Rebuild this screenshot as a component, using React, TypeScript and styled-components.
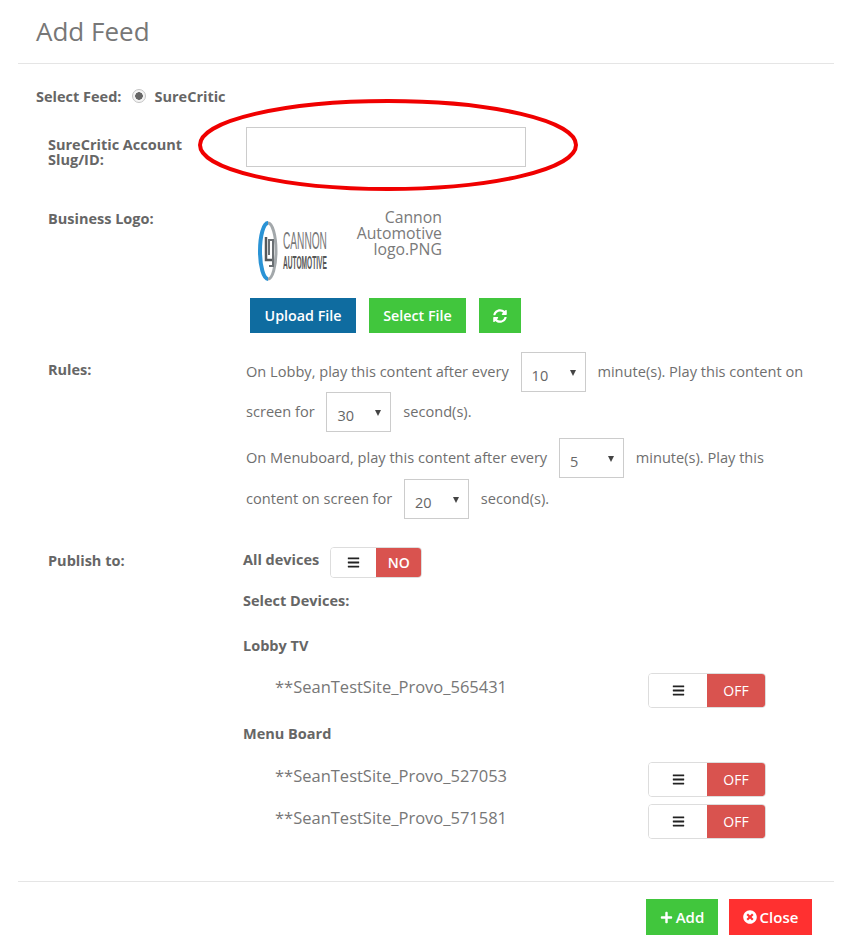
import React from "react"
import styled, { createGlobalStyle } from "styled-components"
import { FaBars, FaPlus, FaSyncAlt, FaTimesCircle } from "react-icons/fa"

const GlobalStyle = createGlobalStyle`
  html, body {
    margin: 0;
    padding: 0;
    background: #fff;
  }
  body {
    font-family: "Open Sans", "Noto Sans", sans-serif;
    color: #6b6b6b;
  }
`

const Switch = ({ label, wide }: { label: string, wide?: boolean }) => (
  <SwitchBox $wide={wide}>
    <SwitchHandle><FaBars size={13} /></SwitchHandle>
    <SwitchState $wide={wide}>{label}</SwitchState>
  </SwitchBox>
)

const Dropdown = ({ value }: { value: string }) => (
  <SelectBox>
    <span>{value}</span>
    <Caret />
  </SelectBox>
)

const Device = ({ name, top }: { name: string, top: number }) => (
  <DeviceRow $top={top}>
    <DeviceName>{name}</DeviceName>
    <Switch label="OFF" wide />
  </DeviceRow>
)

export default function App() {
  return (
    <>
      <GlobalStyle />
      <Modal>
        <Header>
          <Title>Add Feed</Title>
        </Header>

        <FeedRow>
          <Bold>Select Feed:</Bold>
          <Radio />
          <Bold>SureCritic</Bold>
        </FeedRow>

        <AccountRow>
          <AccountLabel>SureCritic Account<br />Slug/ID:</AccountLabel>
          <InputWrap>
            <TextInput />
            <Ellipse viewBox="0 0 380 94" width="380" height="94">
              <ellipse cx="190" cy="47" rx="188" ry="44" fill="none" stroke="#f00000" strokeWidth="4" />
            </Ellipse>
          </InputWrap>
        </AccountRow>

        <LogoRow>
          <Label>Business Logo:</Label>
          <div>
            <LogoLine>
              <Logo viewBox="0 0 72 62" width="72" height="62">
                <path d="M11 3 A 8 28 0 0 0 11 59" fill="none" stroke="#2a93d5" strokeWidth="4" />
                <path d="M11 3 A 8 28 0 0 1 11 59" fill="none" stroke="#a3a8ab" strokeWidth="3" />
                <path d="M9 17 V40 H15" fill="none" stroke="#55595c" strokeWidth="2.5" />
                <path d="M12 35 V20 H16 V46 H12" fill="none" stroke="#6b7074" strokeWidth="2" />
                <CannonText transform="translate(26 29) scale(0.423 1)">CANNON</CannonText>
                <AutoText transform="translate(26 49) scale(0.367 1)">AUTOMOTIVE</AutoText>
              </Logo>
              <FileName>Cannon<br />Automotive<br />logo.PNG</FileName>
            </LogoLine>
            <ButtonRow>
              <Button $color="#0f6ca0" $width={106}>Upload File</Button>
              <Button $color="#41c63d" $width={97}>Select File</Button>
              <Button $color="#41c63d" $width={42}><FaSyncAlt size={14} /></Button>
            </ButtonRow>
          </div>
        </LogoRow>

        <RulesRow>
          <RulesLabel>Rules:</RulesLabel>
          <RulesText>
            <RuleLine>On Lobby, play this content after every <Dropdown value="10" /> minute(s). Play this content on</RuleLine>
            <RuleLine>screen for <Dropdown value="30" /> second(s).</RuleLine>
            <RuleLine $top={6}>On Menuboard, play this content after every <Dropdown value="5" /> minute(s). Play this</RuleLine>
            <RuleLine $top={1}>content on screen for <Dropdown value="20" /> second(s).</RuleLine>
          </RulesText>
        </RulesRow>

        <PublishRow>
          <PublishLabel>Publish to:</PublishLabel>
          <PublishBody>
            <AllDevices>
              <AllDevicesLabel>All devices</AllDevicesLabel>
              <Switch label="NO" />
            </AllDevices>
            <SelectDevices>Select Devices:</SelectDevices>
            <Group $top={25}>Lobby TV</Group>
            <Device name="**SeanTestSite_Provo_565431" top={17} />
            <Group $top={16}>Menu Board</Group>
            <Device name="**SeanTestSite_Provo_527053" top={18} />
            <Device name="**SeanTestSite_Provo_571581" top={7} />
          </PublishBody>
        </PublishRow>

        <Footer>
          <FooterButton $color="#41c63d" $width={72}><FaPlus size={13} />Add</FooterButton>
          <FooterButton $color="#ff3030" $width={83}><FaTimesCircle size={14} />Close</FooterButton>
        </Footer>
      </Modal>
    </>
  )
}

const Modal = styled.div`
  width: 816px;
  height: 948px;
  margin-left: 18px;
  font-size: 14px;
  overflow: hidden;
`

const Header = styled.div`
  height: 63px;
  border-bottom: 1px solid #e5e5e5;
  box-sizing: content-box;
  display: flex;
  align-items: center;
  padding-left: 18px;
`

const Title = styled.h1`
  margin: 0 0 2px;
  font-size: 26px;
  line-height: 34px;
  font-weight: 400;
  color: #777;
`

const Bold = styled.span`
  font-size: 14.5px;
  font-weight: 700;
  color: #666;
`

const FeedRow = styled.div`
  display: flex;
  align-items: center;
  height: 20px;
  margin-top: 22px;
  padding-left: 18px;
`

const Radio = styled.span`
  width: 14px;
  height: 14px;
  margin: 0 8px 0 11px;
  border: 1px solid #c4c4c4;
  border-radius: 50%;
  background: radial-gradient(circle, #666 0 3.5px, #f4f4f4 4px);
  box-sizing: border-box;
`

const Label = styled.div`
  width: 198px;
  flex: none;
  font-size: 14.5px;
  line-height: 15px;
  font-weight: 700;
  color: #666;
`

const AccountLabel = styled(Label)`
  margin-top: 10px;
`

const AccountRow = styled.div`
  display: flex;
  align-items: center;
  height: 40px;
  margin-top: 21px;
  padding-left: 30px;
`

const InputWrap = styled.div`
  position: relative;
`

const TextInput = styled.input`
  display: block;
  width: 280px;
  height: 40px;
  box-sizing: border-box;
  border: 1px solid #ccc;
  background: #fff;
`

const Ellipse = styled.svg`
  position: absolute;
  left: -48px;
  top: -29px;
`

const LogoRow = styled.div`
  display: flex;
  margin-top: 44px;
  padding-left: 30px;
`

const LogoLine = styled.div`
  display: flex;
  align-items: flex-start;
  height: 87px;
  margin-left: 11px;
`

const Logo = styled.svg`
  margin-top: 9px;
  flex: none;
`

const CannonText = styled.text`
  font-family: "Liberation Sans", sans-serif;
  font-size: 24px;
  fill: #777;
`

const AutoText = styled.text`
  font-family: "Liberation Sans", sans-serif;
  font-size: 18px;
  font-weight: 700;
  fill: #555;
`

const FileName = styled.div`
  width: 86px;
  margin: -2px 0 0 27px;
  font-size: 15.8px;
  line-height: 16px;
  text-align: right;
  color: #7a7a7a;
`

const ButtonRow = styled.div`
  display: flex;
  gap: 13px;
  margin-left: 4px;
`

const Button = styled.button<{ $color: string, $width: number }>`
  width: ${(p) => p.$width}px;
  height: 35px;
  padding: 0;
  border: 0;
  background: ${(p) => p.$color};
  color: #fff;
  font-family: inherit;
  font-size: 14.3px;
  font-weight: 600;
  display: flex;
  align-items: center;
  justify-content: center;
`

const RulesRow = styled.div`
  display: flex;
  margin-top: 19px;
  padding-left: 30px;
`

const RulesLabel = styled(Label)`
  margin-top: 10px;
`

const RulesText = styled.div`
  display: flex;
  flex-direction: column;
`

const RuleLine = styled.div<{ $top?: number }>`
  display: block;
  height: 40px;
  margin-top: ${(p) => p.$top ?? 0}px;
  font-size: 14.6px;
  line-height: 39px;
  color: #6f6f6f;
  white-space: nowrap;
`

const SelectBox = styled.span`
  position: relative;
  display: inline-block;
  vertical-align: top;
  width: 65px;
  height: 40px;
  margin: 0 8px;
  padding-left: 10px;
  box-sizing: border-box;
  border: 1px solid #ccc;
  font-size: 14.5px;
  line-height: 45px;
  color: #666;
`

const Caret = styled.i`
  position: absolute;
  right: 9px;
  top: 17px;
  border-left: 3.5px solid transparent;
  border-right: 3.5px solid transparent;
  border-top: 6px solid #444;
`

const PublishRow = styled.div`
  display: flex;
  margin-top: 27px;
  padding-left: 30px;
`

const PublishLabel = styled(Label)`
  width: 195px;
  margin-top: 7px;
`

const PublishBody = styled.div`
  width: 523px;
`

const AllDevices = styled.div`
  display: flex;
  align-items: center;
  gap: 11px;
  height: 32px;
`

const AllDevicesLabel = styled(Bold)`
  margin-bottom: 5px;
`

const SelectDevices = styled(Bold)`
  display: block;
  margin-top: 13px;
  line-height: 20px;
`

const Group = styled(Bold)<{ $top: number }>`
  display: block;
  margin-top: ${(p) => p.$top}px;
  line-height: 20px;
`

const DeviceRow = styled.div<{ $top: number }>`
  display: flex;
  justify-content: space-between;
  align-items: flex-start;
  padding-left: 32px;
  margin-top: ${(p) => p.$top}px;
`

const DeviceName = styled.span`
  margin-top: 2px;
  font-size: 16.5px;
  line-height: 24px;
  color: #777;
`

const SwitchBox = styled.div<{ $wide?: boolean }>`
  display: flex;
  width: ${(p) => (p.$wide ? "118px" : "92px")};
  height: ${(p) => (p.$wide ? "35px" : "31px")};
  border: 1px solid #ddd;
  border-radius: 4px;
  box-sizing: border-box;
  overflow: hidden;
  flex: none;
`

const SwitchHandle = styled.span`
  flex: 1;
  display: flex;
  align-items: center;
  justify-content: center;
  color: #222;
  background: #fff;
`

const SwitchState = styled.span<{ $wide?: boolean }>`
  width: ${(p) => (p.$wide ? "58px" : "45px")};
  display: flex;
  align-items: center;
  justify-content: center;
  background: #d9534f;
  color: #fff;
  font-size: 14px;
  font-weight: ${(p) => (p.$wide ? 400 : 600)};
`

const Footer = styled.div`
  display: flex;
  justify-content: flex-end;
  gap: 11px;
  height: 66px;
  margin-top: 42px;
  padding: 17px 22px 0 0;
  border-top: 1px solid #e5e5e5;
  box-sizing: border-box;
`

const FooterButton = styled.button<{ $color: string, $width: number }>`
  display: flex;
  align-items: center;
  justify-content: center;
  gap: 3px;
  width: ${(p) => p.$width}px;
  height: 36px;
  padding: 0;
  border: 0;
  background: ${(p) => p.$color};
  color: #fff;
  font-family: inherit;
  font-size: 15px;
  font-weight: 600;
`
